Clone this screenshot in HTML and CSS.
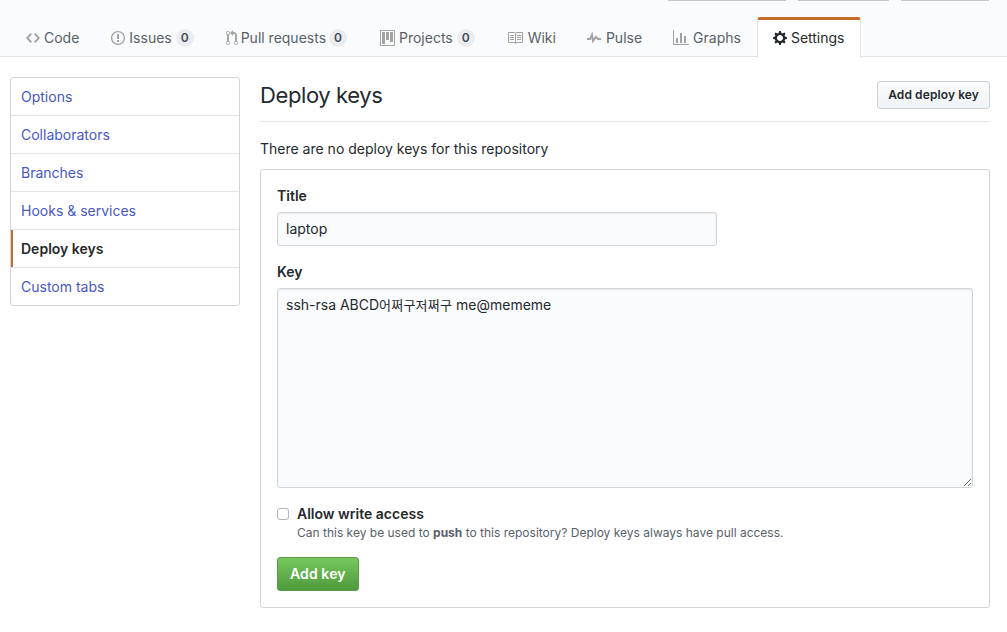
FILE: index.html
```html
<!DOCTYPE html>
<html lang="en">
<head>
  <meta charset="UTF-8">
  <title>Deploy keys</title>
  <link rel="stylesheet" href="styles.css">
</head>
<body>
  <div class="cabecalho">
    <div class="botoes-topo">
      <span class="topo-1"></span>
      <span class="topo-2"></span>
      <span class="topo-3"></span>
    </div>
    <nav class="abas">
      <a class="aba aba-code">
        <svg width="14" height="16" viewBox="0 0 14 16"><path fill="#a3a3a3" d="M9.5 3L8 4.5 11.5 8 8 11.5 9.5 13 14 8 9.5 3zm-5 0L0 8l4.5 5L6 11.5 2.5 8 6 4.5 4.5 3z"/></svg>
        Code
      </a>
      <a class="aba aba-issues">
        <svg width="14" height="16" viewBox="0 0 14 16"><path fill="#a3a3a3" fill-rule="evenodd" d="M7 2.3c3.14 0 5.7 2.56 5.7 5.7s-2.56 5.7-5.7 5.7A5.71 5.71 0 0 1 1.3 8c0-3.14 2.56-5.7 5.7-5.7zM7 1C3.14 1 0 4.14 0 8s3.14 7 7 7 7-3.14 7-7-3.14-7-7-7zm1 3H6v5h2V4zm0 6H6v2h2v-2z"/></svg>
        Issues <span class="contador">0</span>
      </a>
      <a class="aba aba-pulls">
        <svg width="12" height="16" viewBox="0 0 12 16"><path fill="#a3a3a3" fill-rule="evenodd" d="M11 11.28V5c-.03-.78-.34-1.47-.94-2.06C9.46 2.35 8.78 2.03 8 2H7V0L4 3l3 3V4h1c.27.02.48.11.69.31.21.2.3.42.31.69v6.28A1.993 1.993 0 0 0 10 15a1.993 1.993 0 0 0 1-3.72zm-1 2.92c-.66 0-1.2-.55-1.2-1.2 0-.65.55-1.2 1.2-1.2.65 0 1.2.55 1.2 1.2 0 .65-.55 1.2-1.2 1.2zM4 3c0-1.11-.89-2-2-2a1.993 1.993 0 0 0-1 3.72v6.56A1.993 1.993 0 0 0 2 15a1.993 1.993 0 0 0 1-3.72V4.72c.59-.34 1-.98 1-1.72zm-.8 10c0 .66-.55 1.2-1.2 1.2-.65 0-1.2-.55-1.2-1.2 0-.65.55-1.2 1.2-1.2.65 0 1.2.55 1.2 1.2zM2 4.2C1.34 4.2.8 3.65.8 3c0-.65.55-1.2 1.2-1.2.65 0 1.2.55 1.2 1.2 0 .65-.55 1.2-1.2 1.2z"/></svg>
        Pull requests <span class="contador">0</span>
      </a>
      <a class="aba aba-projects">
        <svg width="15" height="16" viewBox="0 0 15 16"><path fill="#a3a3a3" fill-rule="evenodd" d="M10 12h3V2h-3v10zm-4-2h3V2H6v8zm-4 4h3V2H2v12zm-1 1h13V1H1v14zM14 0H1a1 1 0 0 0-1 1v14a1 1 0 0 0 1 1h13a1 1 0 0 0 1-1V1a1 1 0 0 0-1-1z"/></svg>
        Projects <span class="contador">0</span>
      </a>
      <a class="aba aba-wiki">
        <svg width="16" height="16" viewBox="0 0 16 16"><path fill="#a3a3a3" fill-rule="evenodd" d="M3 5h4v1H3V5zm0 3h4V7H3v1zm0 2h4V9H3v1zm11-5h-4v1h4V5zm0 2h-4v1h4V7zm0 2h-4v1h4V9zm2-6v9c0 .55-.45 1-1 1H9.5l-1 1-1-1H2c-.55 0-1-.45-1-1V3c0-.55.45-1 1-1h5.5l1 1 1-1H15c.55 0 1 .45 1 1zm-8 .5L7.5 3H2v9h6V3.5zm7-.5H9.5l-.5.5V12h6V3z"/></svg>
        Wiki
      </a>
      <a class="aba aba-pulse">
        <svg width="14" height="16" viewBox="0 0 14 16"><path fill="#a3a3a3" fill-rule="evenodd" d="M11.5 8L8.8 5.4 6.6 8.5 5.5 1.6 2.38 8H0v2h3.6l.9-1.8.9 5.4L9 8.5l1.6 1.5H14V8h-2.5z"/></svg>
        Pulse
      </a>
      <a class="aba aba-graphs">
        <svg width="16" height="16" viewBox="0 0 16 16"><path fill="#a3a3a3" fill-rule="evenodd" d="M16 14v1H0V0h1v14h15zM5 13H3V8h2v5zm4 0H7V3h2v10zm4 0h-2V6h2v7z"/></svg>
        Graphs
      </a>
      <a class="aba aba-ativa">
        <svg width="14" height="16" viewBox="0 0 14 16"><path fill="#24292e" fill-rule="evenodd" d="M14 8.77v-1.6l-1.94-.64-.45-1.09.88-1.84-1.13-1.13-1.81.91-1.09-.45-.69-1.92h-1.6l-.63 1.94-1.11.45-1.84-.88-1.13 1.13.91 1.81-.45 1.09L0 7.23v1.59l1.94.64.45 1.09-.88 1.84 1.13 1.13 1.81-.91 1.09.45.69 1.92h1.59l.63-1.94 1.11-.45 1.84.88 1.13-1.13-.92-1.81.47-1.09L14 8.75v.02zM7 11c-1.66 0-3-1.34-3-3s1.34-3 3-3 3 1.34 3 3-1.34 3-3 3z"/></svg>
        Settings
      </a>
    </nav>
  </div>

  <div class="conteudo">
    <ul class="menu">
      <li><a>Options</a></li>
      <li><a>Collaborators</a></li>
      <li><a>Branches</a></li>
      <li><a>Hooks &amp; services</a></li>
      <li class="selecionado"><a>Deploy keys</a></li>
      <li><a>Custom tabs</a></li>
    </ul>

    <main class="principal">
      <div class="titulo">
        <h2>Deploy keys</h2>
        <button class="btn btn-pequeno">Add deploy key</button>
      </div>
      <p class="aviso">There are no deploy keys for this repository</p>

      <form class="caixa">
        <label class="rotulo" for="titulo">Title</label>
        <input class="campo campo-titulo" id="titulo" type="text" value="laptop">
        <div class="rotulo rotulo-key">Key</div>
        <div class="campo campo-chave" contenteditable="true">ssh-rsa ABCD<span class="coreano">어쩌구저쩌구</span> me@mememe</div>
        <div class="opcao">
          <input type="checkbox" id="escrita">
          <div>
            <label for="escrita">Allow write access</label>
            <p class="nota">Can this key be used to <strong>push</strong> to this repository? Deploy keys always have pull access.</p>
          </div>
        </div>
        <button class="btn btn-verde" type="button">Add key</button>
      </form>
    </main>
  </div>
</body>
</html>
```

FILE: styles.css
```css
* {
  box-sizing: border-box;
}

body {
  margin: 0;
  font-family: Inter, "Liberation Sans", "Noto Sans CJK KR", sans-serif;
  font-size: 14px;
  color: #24292e;
  background: #fff;
  overflow: hidden;
}

.cabecalho {
  height: 57px;
  background: #fafbfc;
  border-bottom: 1px solid #e1e4e8;
  position: relative;
}

.botoes-topo {
  display: flex;
  height: 1px;
  padding-left: 668px;
}

.botoes-topo span {
  height: 1px;
  background: #c8c8c8;
}

.topo-1 { width: 118px; margin-right: 12px; }
.topo-2 { width: 91px; margin-right: 12px; }
.topo-3 { width: 88px; }

.abas {
  display: flex;
  align-items: flex-start;
  padding: 16px 0 0 10px;
}

.aba {
  display: flex;
  align-items: center;
  gap: 4px;
  height: 41px;
  padding: 0 16px;
  color: #586069;
  font-size: 14px;
  white-space: nowrap;
}

.aba-pulls { gap: 3px; padding-right: 17px; }
.aba-wiki { gap: 5px; padding-right: 15px; }
.aba-pulse { gap: 5px; padding-right: 15px; }

.aba-ativa {
  color: #24292e;
  background: #fff;
  border: 1px solid #e1e4e8;
  border-top: 3px solid #c76b29;
  border-bottom: none;
  border-radius: 3px 3px 0 0;
  padding: 0 15px 3px;
}

.contador {
  background: #eaecef;
  color: #444d56;
  font-size: 12px;
  font-weight: 600;
  line-height: 1;
  padding: 3px 5px;
  border-radius: 20px;
}

.conteudo {
  display: flex;
  align-items: flex-start;
  padding: 20px 17px 0 10px;
  gap: 20px;
}

.menu {
  width: 230px;
  flex-shrink: 0;
  list-style: none;
  margin: 0;
  padding: 0;
  border: 1px solid #d1d5da;
  border-radius: 3px;
}

.menu li {
  height: 38px;
  border-bottom: 1px solid #e1e4e8;
  display: flex;
  align-items: center;
  padding-left: 10px;
  color: #4658c8;
}

.menu li:last-child {
  border-bottom: none;
  height: 37px;
}

.menu .selecionado {
  color: #24292e;
  font-weight: 600;
  box-shadow: inset 2px 0 0 #c76b29;
}

.principal {
  flex: 1;
}

.titulo {
  display: flex;
  justify-content: space-between;
  align-items: center;
  padding: 4px 0 12px;
  height: 45px;
  border-bottom: 1px solid #e1e4e8;
}

.titulo h2 {
  margin: 0;
  font-size: 22px;
  letter-spacing: -0.4px;
  font-weight: 400;
}

.btn {
  font-family: inherit;
  font-weight: 600;
  border-radius: 3px;
  cursor: pointer;
}

.btn-pequeno {
  font-size: 12px;
  height: 28px;
  padding: 0 10px 1px;
  letter-spacing: 0.1px;
  color: #24292e;
  background: linear-gradient(#fafbfc, #eff3f6);
  border: 1px solid #cdcfd1;
}

.aviso {
  margin: 17px 0 10px;
  line-height: 20px;
}

.caixa {
  border: 1px solid #d1d5da;
  border-radius: 3px;
  padding: 16px;
}

.rotulo {
  display: block;
  font-weight: 600;
  line-height: 20px;
  margin-bottom: 6px;
}

.rotulo-key {
  margin-top: 16px;
}

.campo {
  display: block;
  font-family: inherit;
  font-size: 14px;
  color: #24292e;
  background: #fafbfc;
  border: 1px solid #d1d5da;
  border-radius: 3px;
  padding: 6px 8px;
  line-height: 20px;
  box-shadow: inset 0 1px 2px rgba(27, 31, 35, 0.075);
}

.campo-titulo {
  width: 440px;
  height: 34px;
  padding: 5px 8px 7px;
}

.campo-chave {
  width: 100%;
  height: 200px;
  overflow: auto;
  resize: vertical;
}

.coreano {
  font-size: 13px;
  letter-spacing: 0.2px;
}

.opcao {
  display: flex;
  align-items: flex-start;
  gap: 8px;
  margin-top: 16px;
}

.opcao input {
  appearance: none;
  margin: 4px 0 0;
  width: 12px;
  height: 12px;
  background: #fff;
  border: 1px solid #b4b4b4;
  border-radius: 3px;
}

.opcao label {
  display: block;
  font-weight: 600;
  line-height: 20px;
}

.nota {
  margin: 0;
  font-size: 12px;
  line-height: 17px;
  color: #586069;
}

.btn-verde {
  display: block;
  margin-top: 16px;
  height: 34px;
  padding: 0 12px 1px;
  letter-spacing: 0.1px;
  font-size: 14px;
  color: #fff;
  background: linear-gradient(#77c75e, #4f9a3c);
  border: 1px solid #5a9a48;
}
```
